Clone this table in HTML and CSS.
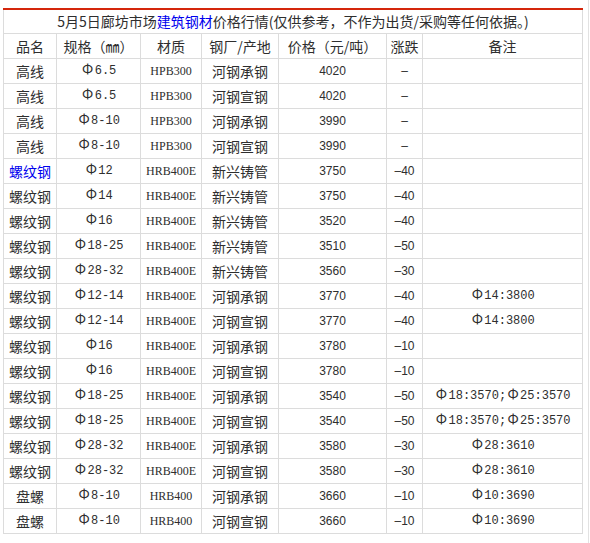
FILE: index.html
```html
<!DOCTYPE html>
<html lang="zh-CN">
<head>
<meta charset="utf-8">
<title>廊坊市场建筑钢材价格行情</title>
<link rel="stylesheet" href="styles.css">
</head>
<body>
<div class="page">
<table class="price">
  <colgroup>
    <col class="c1"><col class="c2"><col class="c3"><col class="c4"><col class="c5"><col class="c6"><col class="c7">
  </colgroup>
  <tr class="title"><td colspan="7">5月5日廊坊市场<a class="link">建筑钢材</a>价格行情(仅供参考，不作为出货/采购等任何依据。)</td></tr>
  <tr class="head"><td>品名</td><td>规格（㎜）</td><td>材质</td><td>钢厂/产地</td><td>价格（元/吨）</td><td>涨跌</td><td>备注</td></tr>
  <tr><td>高线</td><td class="spec"><span class="phi">Φ</span>6.5</td><td class="mat">HPB300</td><td>河钢承钢</td><td class="num">4020</td><td class="num">–</td><td class="note"></td></tr>
  <tr><td>高线</td><td class="spec"><span class="phi">Φ</span>6.5</td><td class="mat">HPB300</td><td>河钢宣钢</td><td class="num">4020</td><td class="num">–</td><td class="note"></td></tr>
  <tr><td>高线</td><td class="spec"><span class="phi">Φ</span>8-10</td><td class="mat">HPB300</td><td>河钢承钢</td><td class="num">3990</td><td class="num">–</td><td class="note"></td></tr>
  <tr><td>高线</td><td class="spec"><span class="phi">Φ</span>8-10</td><td class="mat">HPB300</td><td>河钢宣钢</td><td class="num">3990</td><td class="num">–</td><td class="note"></td></tr>
  <tr><td><a class="link">螺纹钢</a></td><td class="spec"><span class="phi">Φ</span>12</td><td class="mat">HRB400E</td><td>新兴铸管</td><td class="num">3750</td><td class="num">–40</td><td class="note"></td></tr>
  <tr><td>螺纹钢</td><td class="spec"><span class="phi">Φ</span>14</td><td class="mat">HRB400E</td><td>新兴铸管</td><td class="num">3750</td><td class="num">–40</td><td class="note"></td></tr>
  <tr><td>螺纹钢</td><td class="spec"><span class="phi">Φ</span>16</td><td class="mat">HRB400E</td><td>新兴铸管</td><td class="num">3520</td><td class="num">–40</td><td class="note"></td></tr>
  <tr><td>螺纹钢</td><td class="spec"><span class="phi">Φ</span>18-25</td><td class="mat">HRB400E</td><td>新兴铸管</td><td class="num">3510</td><td class="num">–50</td><td class="note"></td></tr>
  <tr><td>螺纹钢</td><td class="spec"><span class="phi">Φ</span>28-32</td><td class="mat">HRB400E</td><td>新兴铸管</td><td class="num">3560</td><td class="num">–30</td><td class="note"></td></tr>
  <tr><td>螺纹钢</td><td class="spec"><span class="phi">Φ</span>12-14</td><td class="mat">HRB400E</td><td>河钢承钢</td><td class="num">3770</td><td class="num">–40</td><td class="note"><span class="phi">Φ</span>14:3800</td></tr>
  <tr><td>螺纹钢</td><td class="spec"><span class="phi">Φ</span>12-14</td><td class="mat">HRB400E</td><td>河钢宣钢</td><td class="num">3770</td><td class="num">–40</td><td class="note"><span class="phi">Φ</span>14:3800</td></tr>
  <tr><td>螺纹钢</td><td class="spec"><span class="phi">Φ</span>16</td><td class="mat">HRB400E</td><td>河钢承钢</td><td class="num">3780</td><td class="num">–10</td><td class="note"></td></tr>
  <tr><td>螺纹钢</td><td class="spec"><span class="phi">Φ</span>16</td><td class="mat">HRB400E</td><td>河钢宣钢</td><td class="num">3780</td><td class="num">–10</td><td class="note"></td></tr>
  <tr><td>螺纹钢</td><td class="spec"><span class="phi">Φ</span>18-25</td><td class="mat">HRB400E</td><td>河钢承钢</td><td class="num">3540</td><td class="num">–50</td><td class="note"><span class="phi">Φ</span>18:3570;<span class="phi">Φ</span>25:3570</td></tr>
  <tr><td>螺纹钢</td><td class="spec"><span class="phi">Φ</span>18-25</td><td class="mat">HRB400E</td><td>河钢宣钢</td><td class="num">3540</td><td class="num">–50</td><td class="note"><span class="phi">Φ</span>18:3570;<span class="phi">Φ</span>25:3570</td></tr>
  <tr><td>螺纹钢</td><td class="spec"><span class="phi">Φ</span>28-32</td><td class="mat">HRB400E</td><td>河钢承钢</td><td class="num">3580</td><td class="num">–30</td><td class="note"><span class="phi">Φ</span>28:3610</td></tr>
  <tr><td>螺纹钢</td><td class="spec"><span class="phi">Φ</span>28-32</td><td class="mat">HRB400E</td><td>河钢宣钢</td><td class="num">3580</td><td class="num">–30</td><td class="note"><span class="phi">Φ</span>28:3610</td></tr>
  <tr><td>盘螺</td><td class="spec"><span class="phi">Φ</span>8-10</td><td class="mat">HRB400</td><td>河钢承钢</td><td class="num">3660</td><td class="num">–10</td><td class="note"><span class="phi">Φ</span>10:3690</td></tr>
  <tr><td>盘螺</td><td class="spec"><span class="phi">Φ</span>8-10</td><td class="mat">HRB400</td><td>河钢宣钢</td><td class="num">3660</td><td class="num">–10</td><td class="note"><span class="phi">Φ</span>10:3690</td></tr>
</table>
</div>
</body>
</html>
```
FILE: styles.css
```css
html, body {
  margin: 0;
  padding: 0;
  background: #fff;
}
.page {
  width: 589px;
  height: 543px;
  border-right: 1px solid #e2e2e2;
  padding: 8px 0 0 3px;
  box-sizing: border-box;
  overflow: hidden;
}
.price {
  width: 580px;
  table-layout: fixed;
  border-collapse: separate;
  border-spacing: 0;
  border-top: 2px solid #d4260c;
  font-family: "Noto Sans CJK SC", sans-serif;
  font-size: 14px;
  color: #2e2e2e;
}
.c1 { width: 54px; }
.c2 { width: 84px; }
.c3 { width: 61px; }
.c4 { width: 77px; }
.c5 { width: 108px; }
.c6 { width: 36px; }
.c7 { width: 160px; }
.price td {
  box-sizing: border-box;
  height: 25px;
  padding: 0;
  line-height: 24px;
  text-align: center;
  white-space: nowrap;
  overflow: hidden;
  border-right: 1px solid #dcdcdc;
  border-bottom: 1px solid #dcdcdc;
}
.price td:first-child {
  border-left: 1px solid #dcdcdc;
}
.price .title td {
  height: 24px;
  line-height: 23px;
}
.link {
  color: #0000ee;
  text-decoration: none;
}
.spec, .note {
  font-family: "Liberation Mono", monospace;
  font-size: 12px;
}
.phi {
  font-family: "Noto Sans CJK SC", sans-serif;
  font-size: 14px;
  line-height: 14px;
  display: inline-block;
  width: 14px;
  text-align: center;
}
.mat {
  font-family: "Liberation Serif", serif;
  font-size: 12px;
}
.num {
  font-family: "Liberation Sans", sans-serif;
  font-size: 12px;
}
```
